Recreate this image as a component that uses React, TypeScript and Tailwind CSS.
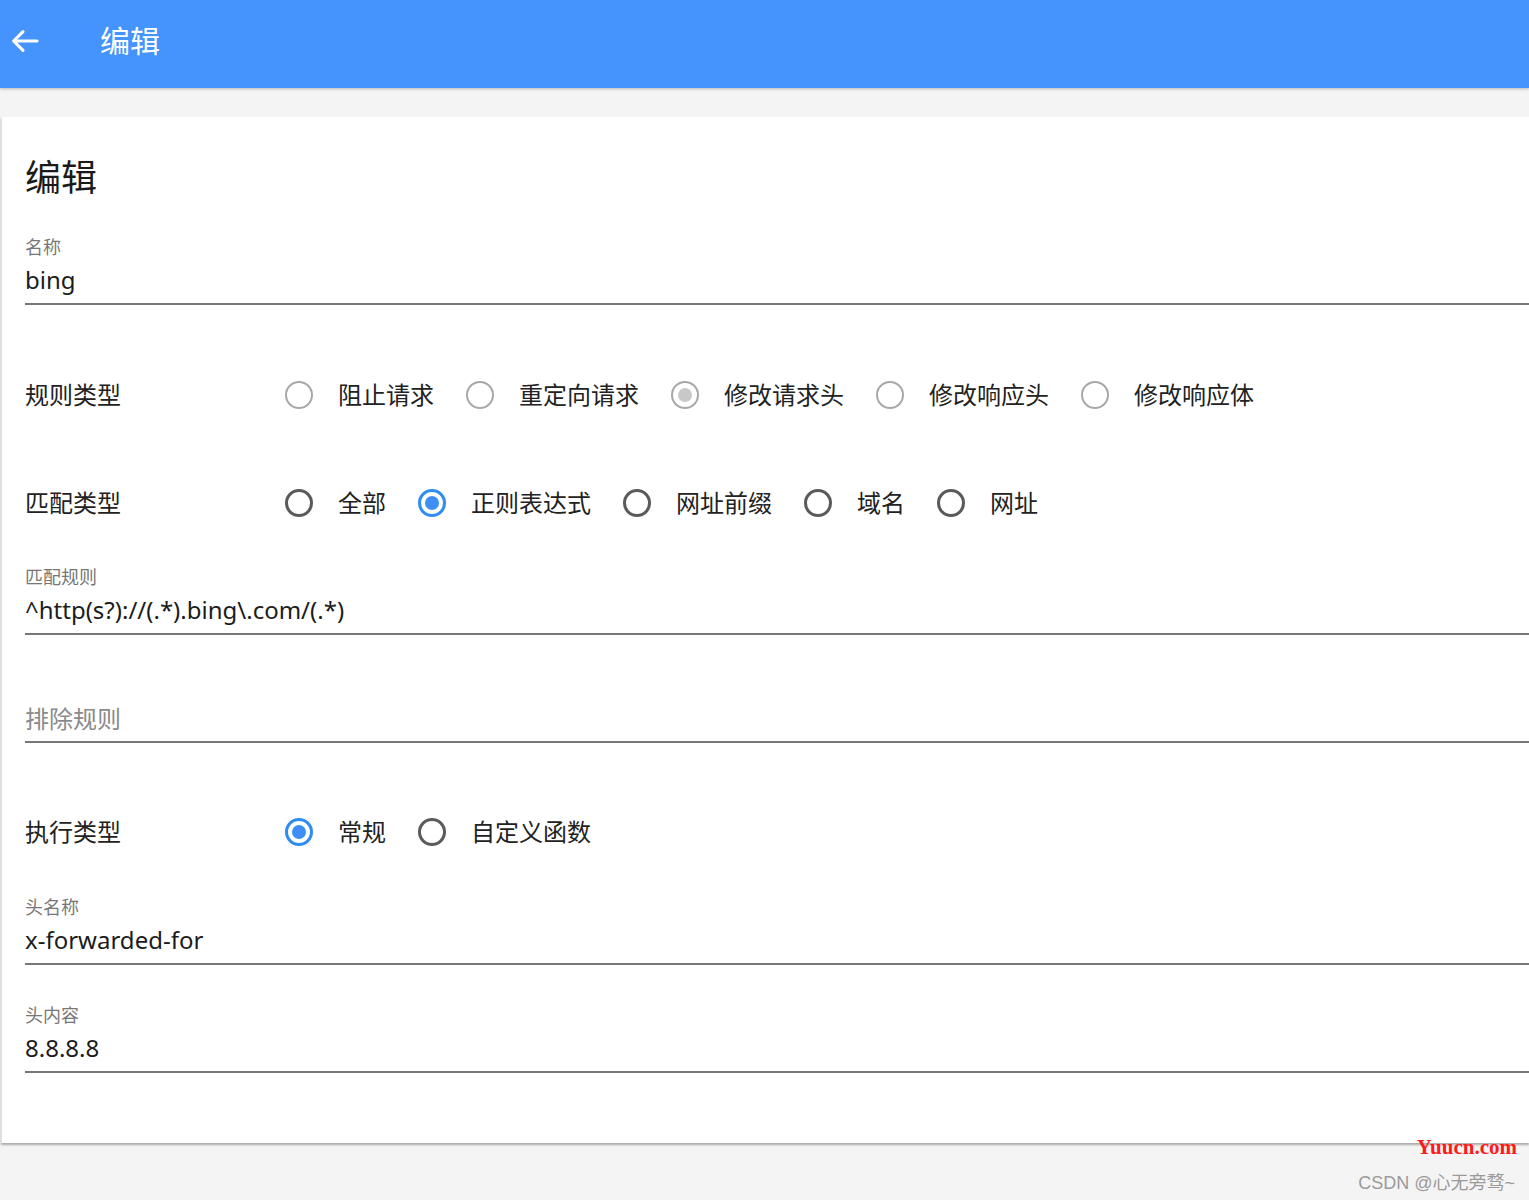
import React from "react";

const FONT = '"Noto Sans", "Noto Sans CJK SC", sans-serif';

type Opt = { label: string; checked?: boolean };

const Radio = ({ checked, tone }: { checked?: boolean; tone: "muted" | "dark" }) => {
  const ring =
    tone === "muted"
      ? "border-[#a8a8a8] border-2"
      : checked
      ? "border-[#2f8cf0] border-[3px]"
      : "border-[#5a5a5a] border-[3px]";
  const dot = tone === "muted" ? "bg-[#c8c8c8]" : "bg-[#3d8ff3]";
  return (
    <span className={`flex h-[28px] w-[28px] shrink-0 items-center justify-center rounded-full bg-white ${ring}`}>
      {checked && <span className={`h-[14px] w-[14px] rounded-full ${dot}`} />}
    </span>
  );
};

const RadioRow = ({ title, options, disabled }: { title: string; options: Opt[]; disabled?: boolean }) => (
  <div className="flex h-[56px] items-center">
    <div className="w-[260px] text-[24px] text-[#222]">{title}</div>
    <div className="flex items-center">
      {options.map((o, i) => (
        <div key={o.label} className={`flex items-center ${i > 0 ? "ml-[32px]" : ""}`}>
          <Radio checked={o.checked} tone={disabled ? "muted" : "dark"} />
          <span className="ml-[25px] text-[24px] leading-none text-[#222]">{o.label}</span>
        </div>
      ))}
    </div>
  </div>
);

const TextField = ({ label, value, className }: { label: string; value: string; className?: string }) => (
  <div className={className}>
    <div className="text-[18px] leading-[24px] text-[#777]">{label}</div>
    <div className="mt-[2px] border-b-2 border-[#777] pb-[4px] text-[24px] leading-[38px] text-[#1c1c1c]">
      {value}
    </div>
  </div>
);

export default function App() {
  return (
    <div className="relative min-h-[1200px] bg-[#f5f4f4]" style={{ fontFamily: FONT }}>
      {/* app bar */}
      <div className="flex h-[88px] items-center bg-[#4593fc] pb-[7px] shadow-[0_1px_3px_rgba(0,0,0,0.25)]">
        <svg className="ml-[9px] h-[32px] w-[32px]" viewBox="0 0 24 24" fill="none" stroke="white" strokeWidth="2.3" strokeLinecap="round" strokeLinejoin="round">
          <path d="M21 12H3.5M10.5 5L3.5 12l7 7" />
        </svg>
        <div className="ml-[59px] text-[30px] text-white">编辑</div>
      </div>

      {/* card */}
      <div className="ml-[1px] mt-[29px] h-[1026px] border-l border-[#e2e2e2] bg-white pl-[23px] shadow-[0_2px_2px_rgba(0,0,0,0.3)]">
        <div className="pt-[37px] text-[36px] leading-[48px] text-[#1a1a1a]">编辑</div>

        <TextField className="mt-[33px]" label="名称" value="bing" />

        <div className="mt-[62px]">
          <RadioRow
            title="规则类型"
            disabled
            options={[
              { label: "阻止请求" },
              { label: "重定向请求" },
              { label: "修改请求头", checked: true },
              { label: "修改响应头" },
              { label: "修改响应体" },
            ]}
          />
        </div>

        <div className="mt-[52px]">
          <RadioRow
            title="匹配类型"
            options={[
              { label: "全部" },
              { label: "正则表达式", checked: true },
              { label: "网址前缀" },
              { label: "域名" },
              { label: "网址" },
            ]}
          />
        </div>

        <TextField className="mt-[34px]" label="匹配规则" value="^http(s?)://(.*).bing\.com/(.*)" />

        <div className="mt-[65px] border-b-2 border-[#777] pb-[3px] text-[24px] leading-[38px] text-[#8a8a8a]">
          排除规则
        </div>

        <div className="mt-[61px]">
          <RadioRow title="执行类型" options={[{ label: "常规", checked: true }, { label: "自定义函数" }]} />
        </div>

        <TextField className="mt-[35px]" label="头名称" value="x-forwarded-for" />
        <TextField className="mt-[38px]" label="头内容" value="8.8.8.8" />
      </div>

      {/* watermarks */}
      <div
        className="absolute right-[12px] top-[1132px] text-[21px] font-bold text-[#ff1a1a]"
        style={{ fontFamily: '"Liberation Serif", serif' }}
      >
        Yuucn.com
      </div>
      <div
        className="absolute right-[14px] top-[1170px] text-[18px] text-[#9a9a9a]"
        style={{ fontFamily: '"Liberation Sans", "Noto Sans CJK SC", sans-serif' }}
      >
        CSDN @心无旁骛~
      </div>
    </div>
  );
}
